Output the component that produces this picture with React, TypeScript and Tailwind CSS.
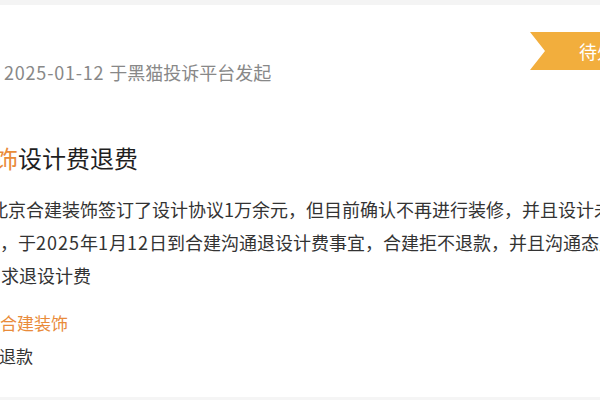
import React from 'react'

const App: React.FC = () => {
  return (
    <div className="w-[600px] h-[400px] overflow-hidden bg-white flex flex-col font-['PingFang_SC','Noto_Sans_CJK_SC',sans-serif]">
      <div className="h-[5px] shrink-0 bg-[#f4f4f4]"></div>

      <div className="relative flex-1 pt-[55px]">
        {/* status ribbon, sits over the header corner */}
        <div className="absolute right-[-40px] top-[27px] h-[38px] w-[110px] bg-[#f2ae3d] [clip-path:polygon(0_0,100%_0,100%_100%,0_100%,15px_50%)] flex items-center pl-[49px]">
          <span className="text-[18px] leading-none text-white whitespace-nowrap">待处理</span>
        </div>

        <p className="ml-[4px] text-[18px] leading-[24px] text-[#888] whitespace-nowrap">
          <span className="tracking-[0.8px]">2025-01-12 </span>于黑猫投诉平台发起
        </p>

        <h1 className="mt-[58px] ml-[-6px] text-[24px] leading-[32px] text-[#1f1f1f] whitespace-nowrap">
          <span className="text-[#e98b3a]">饰</span>设计费退费
        </h1>

        <div className="mt-[19px] text-[18px] leading-[33px] text-[#333] whitespace-nowrap">
          <p className="ml-[-10px]">北京合建装饰签订了设计协议1万余元，但目前确认不再进行装修，并且设计未开始</p>
          <p className="ml-[0px]">
            ，于<span className="tracking-[1px]">2025</span>年<span className="tracking-[1px]">1</span>月
            <span className="tracking-[1px]">12</span>日到合建沟通退设计费事宜，合建拒不退款，并且沟通态度恶劣
          </p>
          <p className="ml-[1px]">求退设计费</p>
        </div>

        <div className="mt-[14px] text-[17px] leading-[33px] whitespace-nowrap">
          <p className="ml-[0px] text-[#e98b3a]">合建装饰</p>
          <p className="ml-[-1px] text-[#333]">退款</p>
        </div>
      </div>

      <div className="h-[3px] shrink-0 bg-[#f5f5f5]"></div>
    </div>
  )
}

export default App
